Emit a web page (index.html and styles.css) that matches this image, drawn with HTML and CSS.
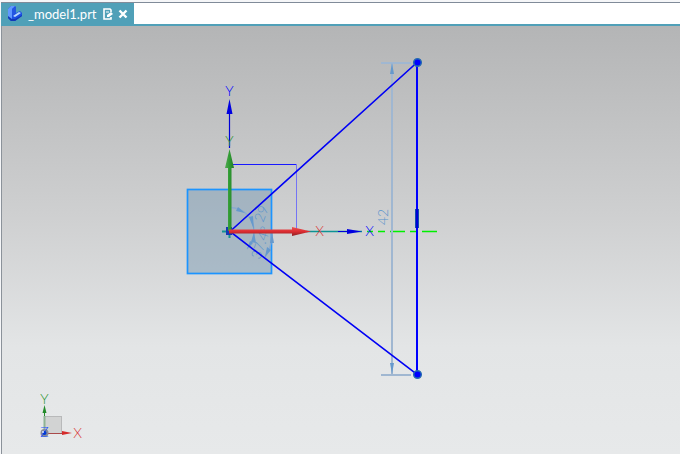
FILE: index.html
```html
<!DOCTYPE html>
<html lang="en">
<head>
<meta charset="utf-8">
<title>_model1.prt</title>
<link rel="stylesheet" href="styles.css">
</head>
<body>
<div class="window">
  <header class="tabs">
    <div class="tab">
      <svg class="part-icon" viewBox="0 0 15 15" aria-hidden="true">
        <path d="M0 3 3 0H7L8 1V7L12 5 14 7V10L7 15H3L0 12Z" fill="#1c4fe4"/>
        <path d="M0 3 3 0H7L4 3V13H3L0 11Z" fill="#6098ff"/>
        <path d="M4 3 8 1V7L4 10Z" fill="#2456e2"/>
        <path d="M5 10 11 6 13 7 7 11Z" fill="#b8d8ff"/>
        <path d="M3 15 0 12V10L4 13H7L14 9V10L7 15Z" fill="#1238b8"/>
      </svg>
      <span class="title">_model1.prt</span>
      <svg class="edit-icon" viewBox="0 0 10 12" aria-hidden="true">
        <path d="M8 4V2L7 1H1V11H8V9" fill="none" stroke="#fff" stroke-width="1.6"/>
        <path d="M3 4H6" stroke="#fff"/>
        <path d="M4 9V7L8 4 10 6 6 9Z" fill="#fff"/>
      </svg>
      <button class="close" type="button" aria-label="Close">
        <svg viewBox="0 0 10 10" aria-hidden="true"><path d="M1.5 1.5 8.5 8.5M8.5 1.5 1.5 8.5" stroke="#fff" stroke-width="2.4"/></svg>
      </button>
    </div>
  </header>
  <main class="viewport">
    <svg class="sketch" viewBox="2 26 678 428" role="img" aria-label="Sketch">
      <defs>
        <linearGradient id="green" x1="0" x2="1"><stop offset="0" stop-color="#54a854"/><stop offset=".5" stop-color="#2f9b32"/><stop offset="1" stop-color="#237a27"/></linearGradient>
        <linearGradient id="red" x1="0" x2="0" y1="0" y2="1"><stop offset="0" stop-color="#ed5252"/><stop offset=".5" stop-color="#dc2d32"/><stop offset="1" stop-color="#8e2024"/></linearGradient>
      </defs>

      <!-- datum plane -->
      <rect x="187.5" y="189.5" width="84" height="84" fill="#7094b0" fill-opacity=".44" stroke="#1c94ff" stroke-width="1.7"/>

      <!-- sketch plane outline -->
      <path d="M230 164.5H296.5" fill="none" stroke="#1818ff"/>
      <path d="M296.5 164V231" fill="none" stroke="#7474f4"/>

      <!-- horizontal reference line -->
      <path d="M306 231.5H362" stroke="#0c9494" stroke-width="1.4"/>
      <path d="M367 231.5H373M378 231.5H385M390 231.5H405M410 231.5H416M422 231.5H437" stroke="#00f000" stroke-width="1.7"/>

      <!-- dimensions -->
      <g class="dimension">
        <path class="extent" d="M381 63H411M381 375H411M392 63V374"/>
        <path class="head" d="M392 63 394 74H390ZM392 374 390 363H394Z"/>
        <path d="M230 207.5A24 24 0 0 1 254 231.5A24 24 0 0 1 247 249M272 231A43 43 0 0 1 265 257" stroke-width="1.4"/>
        <path class="head" d="M245 213 236 211 238 207ZM254 230 249 217 253 216ZM254 232 256 243 251 242ZM247 249 253 243 250 241ZM272 232 274 243 270 243ZM265 257 271 250 267 247Z"/>
      </g>
      <g class="value">
        <text transform="translate(388 225) rotate(-90)">42</text>
        <text transform="translate(263 223) rotate(-69)">29</text>
        <text transform="translate(260 260) rotate(-71)">37.4°</text>
      </g>

      <!-- triangle -->
      <path d="M230 231.5 417 62.5V374.5Z" class="profile"/>
      <path d="M417 62V375" stroke="#0000ff" stroke-width="2"/>
      <rect x="415" y="209" width="4" height="19" fill="#104db0"/>
      <path d="M417 209V228" stroke="#0000d8" stroke-width="2"/>
      <g fill="#0000ff" stroke="#246bb0" stroke-width="1.5">
        <circle cx="417.5" cy="62.5" r="3.8"/><circle cx="417.5" cy="374.5" r="3.8"/>
      </g>

      <!-- blue axes -->
      <path d="M229.5 148V112M338 231.5H350" stroke="#0000d8" stroke-width="1.2"/>
      <path d="M229.5 99 232.5 114H226.5ZM362 231.5 347 234V229Z" fill="#0000e0"/>

      <!-- origin and coloured axes -->
      <path d="M222 231.5H230M229.5 231V238" stroke="#159393" stroke-width="2"/>
      <rect x="226" y="227" width="6" height="8" fill="#1537b5"/>
      <path d="M228 231V168H225L229.5 149 234 168H231.5V231Z" fill="url(#green)"/>
      <path d="M229 229.5H292V227L311 231.5 292 236V233.5H229Z" fill="url(#red)"/>
      <g class="axis">
        <text x="229.5" y="96" fill="#0000ff">Y</text>
        <text x="229.5" y="146" fill="#2b942e">Y</text>
        <text x="319.5" y="236" fill="#d83232">X</text>
        <text x="369.5" y="236" fill="#0000ff">X</text>
      </g>

      <!-- view triad -->
      <rect x="44.5" y="416.5" width="17" height="17" fill="#d2d3d3" stroke="#b8b9ba"/>
      <path d="M44.5 416V411" stroke="#238b2a"/>
      <path d="M44.5 431V416" stroke="#8fb394" stroke-width="2"/>
      <path d="M44.5 405 46.5 413H42.5Z" fill="#238b2a"/>
      <path d="M46 433.5H64" stroke="#a94a4a"/>
      <path d="M72 433 62 435V431Z" fill="#d52c2c"/>
      <circle cx="44.5" cy="433" r="4" fill="#858a99"/>
      <g class="axis">
        <text x="44.5" y="404" fill="#2b942e">Y</text>
        <text x="77.5" y="438" fill="#d83232">X</text>
        <text x="44.5" y="437" fill="#194fff">Z</text>
      </g>
      <circle cx="44.5" cy="433" r="2" fill="#0038d8"/>
      <circle cx="43" cy="432" r="1" fill="#dce8ff"/>
    </svg>
  </main>
</div>
</body>
</html>
```

FILE: styles.css
```css
* { box-sizing: border-box; }
body { margin: 0; font-family: Lato, sans-serif; }
.window {
  display: flex;
  flex-direction: column;
  height: 100vh;
  padding-top: 2px;
  background: #f5f6f8;
}
.tabs {
  display: flex;
  margin-left: 1px;
  height: 24px;
  background: #fff;
  border-top: 1px solid #808b99;
  border-bottom: 2px solid #50a0b8;
}
.tab {
  display: flex;
  align-items: center;
  padding: 0 6px 0 7px;
  background: #50a0b8;
  color: #fff;
}
.part-icon { width: 15px; height: 15px; }
.title { margin: 0 6px 0 5px; font-size: 13px; line-height: 20px; }
.edit-icon { width: 10px; height: 12px; }
.close {
  display: flex;
  margin-left: 5px;
  padding: 0;
  border: 0;
  background: none;
}
.close svg { width: 10px; height: 10px; }
.viewport {
  flex: 1;
  min-height: 0;
  margin-left: 1px;
  border-left: 1px solid #8b929a;
  background: linear-gradient(#b4b5b6, #cfd0d1 45%, #e3e5e6 75%, #e7e9ea);
}
.sketch { display: block; width: 100%; height: 100%; }
.profile { fill: none; stroke: #0000f5; stroke-width: 1.6px; }
.dimension { fill: none; stroke: #8cabcf; }
.extent { stroke: #a0b7d1; stroke-width: 2px; }
.head { fill: #6699cc; stroke: none; }
.value { font-size: 14px; font-weight: 300; fill: #5b94cc; }
.axis { font-size: 14px; font-weight: 300; text-anchor: middle; }
```
